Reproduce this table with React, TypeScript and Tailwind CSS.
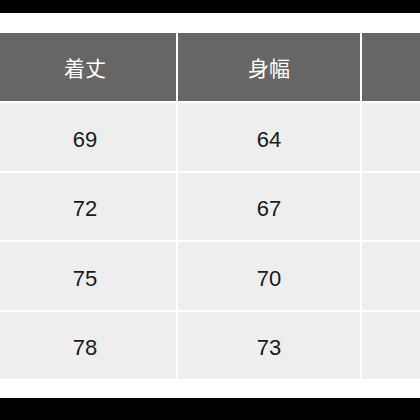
import React from "react";

const rows = [
  ["69", "64", ""],
  ["72", "67", ""],
  ["75", "70", ""],
  ["78", "73", ""],
];

export default function App() {
  return (
    <div
      className="w-[420px] h-[420px] overflow-hidden bg-white flex flex-col"
      style={{ fontFamily: '"Liberation Sans", "Noto Sans CJK JP", sans-serif' }}
    >
      <div className="h-[13px] bg-black shrink-0" />
      <div className="h-[20px] shrink-0" />
      <div className="ml-[-6px] grid grid-cols-[182px_182px_182px] gap-[2px] w-[550px]">
        {["着丈", "身幅", ""].map((h, i) => (
          <div
            key={i}
            className="h-[68px] bg-[#666666] text-white text-[21px] flex items-center justify-center pt-[4px]"
          >
            {h}
          </div>
        ))}
        {rows.map((r, i) =>
          r.map((c, j) => (
            <div
              key={`${i}-${j}`}
              className="h-[67.5px] bg-[#eeeeee] text-[#1a1a1a] text-[22px] flex items-center justify-center pt-[5px]"
            >
              {c}
            </div>
          ))
        )}
      </div>
      <div className="flex-1" />
      <div className="h-[22px] bg-black shrink-0" />
    </div>
  );
}
